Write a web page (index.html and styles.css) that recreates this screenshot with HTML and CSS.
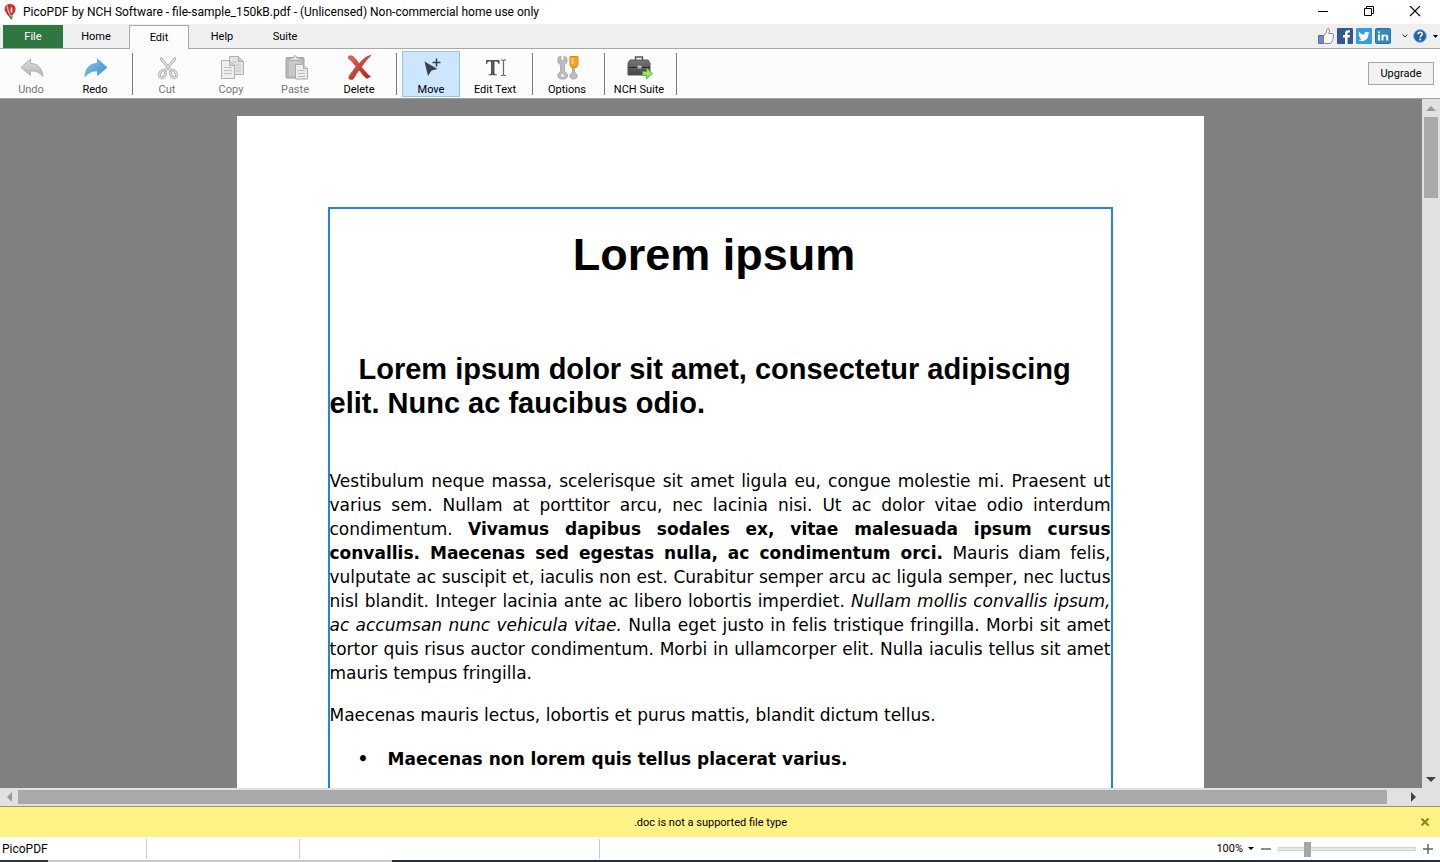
FILE: index.html
```
<!DOCTYPE html>
<html lang="en">
<head>
<meta charset="utf-8">
<title>PicoPDF by NCH Software</title>
<link rel="stylesheet" href="styles.css">
</head>
<body>
<svg class="defs" aria-hidden="true">
  <defs>
    <linearGradient id="gray" x1="0" y1="0" x2="0" y2="1"><stop offset="0" stop-color="#dedede"/><stop offset="1" stop-color="#b4b4b4"/></linearGradient>
    <linearGradient id="blue" x1="0" y1="0" x2="1" y2="1"><stop offset="0" stop-color="#86c3ee"/><stop offset="1" stop-color="#3b8fd0"/></linearGradient>
    <linearGradient id="red" x1="0" y1="0" x2="1" y2="1"><stop offset="0" stop-color="#ee6a55"/><stop offset="1" stop-color="#a91c14"/></linearGradient>
    <linearGradient id="dark" x1="0" y1="0" x2="0" y2="1"><stop offset="0" stop-color="#777"/><stop offset="1" stop-color="#444"/></linearGradient>
  </defs>
</svg>
<div class="app">
  <header class="titlebar">
    <svg class="logo" width="12" height="18" viewBox="0 0 12 18" aria-hidden="true"><path d="M6 1C2 1 .3 3.500.6 6.500.9 9 3 11 5 12.500h3c2-2 4-4 3.500-7.500C11 2.500 9 1 6 1z" fill="#c9352b"/><path d="M3 2.500c0 3 1.500 6 3 9" stroke="#ee9a8c" stroke-width="1.500" fill="none"/><path d="M7.500 4.500v5" stroke="#fff" stroke-width="1.500"/><path d="M5.500 12.500h3.500l-.5 4H6.500z" fill="#8c9a7a"/><path d="M3 10.500l4 5" stroke="#5a3a2a"/></svg>
    <h1 class="window-title">PicoPDF by NCH Software - file-sample_150kB.pdf - (Unlicensed) Non-commercial home use only</h1>
    <div class="window-controls">
      <button class="window-button" aria-label="Minimize"><svg width="12" height="12" viewBox="0 0 12 12"><path d="M1 5.500h10" stroke="#000" fill="none"/></svg></button>
      <button class="window-button" aria-label="Restore"><svg width="12" height="12" viewBox="0 0 12 12"><path d="M1.500 2.500h7v7h-7zM3.500 2.500v-2h7v7h-2" stroke="#000" fill="none"/></svg></button>
      <button class="window-button" aria-label="Close"><svg width="12" height="12" viewBox="0 0 12 12"><path d="M1 0l10 10M11 0L1 10" stroke="#000" stroke-width="1.100" fill="none"/></svg></button>
    </div>
  </header>

  <nav class="tabs" aria-label="Ribbon">
    <button class="tab tab-file">File</button>
    <button class="tab">Home</button>
    <button class="tab tab-active">Edit</button>
    <button class="tab">Help</button>
    <button class="tab">Suite</button>
    <div class="social">
      <button class="social-button" aria-label="Like"><svg width="16" height="16" viewBox="0 0 16 16"><path d="M.5 7.500h5v8h-5z" fill="#6e8cbc" stroke="#4d6ea8"/><path d="M5.500 8L8 5c1-1.500.5-4 1.800-4.500 1.800 0 2 2.500 1 5h4c1 .5 1 1.500.4 2.200.6.800.5 1.600-.2 2.200.4.900.1 1.600-.6 2 .3 1-.2 1.800-1 2.100.1.900-.5 1.500-1.400 1.500H7l-1.500-1z" fill="#fafafa" stroke="#777" stroke-width=".9"/></svg></button>
      <button class="social-button" aria-label="Facebook"><svg width="16" height="16" viewBox="0 0 16 16"><rect width="16" height="16" rx="1" fill="#37558f"/><path d="M8 16V9.500H6V7h2V5.500C8 3.300 9.200 2.200 11 2.200h2v2.400h-1.300c-.8 0-1.100.4-1.100 1.100V7H13l-.3 2.500h-2.100V16z" fill="#fff"/></svg></button>
      <button class="social-button" aria-label="Twitter"><svg width="16" height="16" viewBox="0 0 16 16"><rect width="16" height="16" rx="1" fill="#349ce0"/><path d="M13.800 4.300l-1.300.4a2.400 2.400 0 0 0-4.200 2.100C6.300 6.700 4.500 5.800 3 3.800c-.7 1.500-.2 2.700.8 3.400L2.600 7c.1 1.200.8 2 2 2.400l-1 .1c.3.800 1 1.400 2.100 1.500-.9.800-2.100 1.100-3.500 1 4.800 2.700 10.200.2 10.200-5.400z" fill="#fff"/></svg></button>
      <button class="social-button" aria-label="LinkedIn"><svg width="16" height="16" viewBox="0 0 16 16"><rect x=".5" y=".5" width="15" height="15" rx="1" fill="#3489bd" stroke="#25719f"/><path d="M3 6.500h2v6H3zM3 3.500h2v1.800H3zM6.500 6.500h2v1c1.300-1.800 4.700-1.300 4.700 1.500v3.500h-2V9.600c0-2-2.700-1.800-2.700 0v2.900h-2z" fill="#fff"/></svg></button>
      <button class="social-button" aria-label="More"><svg width="6" height="4" viewBox="0 0 6 4"><path d="M.5.5L3 3 5.500.5" stroke="#222" fill="none"/></svg></button>
      <button class="social-button" aria-label="Help"><svg width="14" height="14" viewBox="0 0 14 14"><circle cx="7" cy="7" r="6.400" fill="#1d5fb0" stroke="#8fb4dc"/><path d="M4.900 5.200c.2-2.700 4.500-2.500 4.300 0-.1 1.400-2 1.500-2 3.200" stroke="#fff" stroke-width="1.600" fill="none"/><circle cx="7.200" cy="10.500" r="1" fill="#fff"/></svg></button>
      <button class="social-button" aria-label="Help menu"><svg width="5" height="3" viewBox="0 0 5 3"><path d="M0 0h5L2.500 3z"/></svg></button>
    </div>
  </nav>

  <div class="toolbar" role="toolbar" aria-label="Edit">
    <div class="group group-first">
      <button class="tool" disabled><svg width="28" height="28" viewBox="0 0 28 28"><path d="M4 14.500L13.500 6V10.500C21 10.500 25 15 26 23.500 22 19 18.500 17.500 13.500 18V22.500z" fill="url(#gray)" stroke="#b0b0b0"/></svg>Undo</button>
      <button class="tool"><svg width="28" height="28" viewBox="0 0 28 28"><path d="M26 14.500L16.500 6V10.500C9 10.500 4.500 15 4 23.500 8 19 12 17.500 16.500 18V22.500z" fill="url(#blue)" stroke="#69aede"/></svg>Redo</button>
    </div>
    <div class="group">
      <button class="tool" disabled><svg width="28" height="28" viewBox="0 0 28 28"><g fill="none" stroke="#b9b9b9" stroke-width="3"><ellipse cx="9.500" cy="21" rx="2.800" ry="4" transform="rotate(28 9.500 21)"/><ellipse cx="20.500" cy="21" rx="2.800" ry="4" transform="rotate(-28 20.500 21)"/></g><g fill="none" stroke="#e2e2e2"><ellipse cx="9.500" cy="21" rx="2.800" ry="4" transform="rotate(28 9.500 21)"/><ellipse cx="20.500" cy="21" rx="2.800" ry="4" transform="rotate(-28 20.500 21)"/></g><path d="M8 4L7.500 7l10 11.500 1.500-1.500zM22 4l.5 3-10 11.500L11 17z" fill="#dedede" stroke="#b5b5b5"/></svg>Cut</button>
      <button class="tool" disabled><svg width="28" height="28" viewBox="0 0 28 28"><path d="M12.500 3.500h9l5 5v13h-14z" fill="#e3e3e3" stroke="#b0b0b0"/><path d="M21.500 3.500v5h5" fill="#ccc" stroke="#b0b0b0"/><path d="M15 9h5M15 12h9M19 15h5M19 18h5" stroke="#c3c3c3"/><path d="M4.500 7.500h8l5 5v13h-13z" fill="#eee" stroke="#b0b0b0"/><path d="M12.500 7.500v5h5" fill="#d0d0d0" stroke="#b0b0b0"/><path d="M7 14.500h8M7 17.500h8M7 20.500h8" stroke="#c0c0c0"/></svg>Copy</button>
      <button class="tool" disabled><svg width="28" height="28" viewBox="0 0 28 28"><rect x="5" y="4.500" width="18" height="20.500" rx="1" fill="#b8b8b8" stroke="#a2a2a2"/><path d="M8 7h12v16H8z" fill="#c9c9c9"/><path d="M9 7.500V5h3c0-3 4-3 4 0h3v2.500z" fill="#e0e0e0" stroke="#aaa"/><path d="M14.500 11.500h8l4 4v10.500h-12z" fill="#eee" stroke="#aaa"/><path d="M22.500 11.500v4h4" fill="#d5d5d5" stroke="#aaa"/><path d="M17 17.500h7M17 20.500h7M17 23.500h7" stroke="#bbb"/></svg>Paste</button>
      <button class="tool"><svg width="28" height="28" viewBox="0 0 28 28"><path d="M4 3c4-1 6 2 10 8 3-4 7-8 12-8.500C22 6 19 10 16.500 14c4 5 6.500 8 9 9.500l-3.500 2c-3-2-5.500-5.500-8-8.500-3 4-4.500 8-6.500 9.500C4 27 3 25 4.500 22.500c2-3 4.500-6 6.500-9C8.500 10 6 7 3 5z" fill="url(#red)" stroke="#b43228" stroke-width=".6"/></svg>Delete</button>
    </div>
    <div class="group">
      <button class="tool tool-selected" aria-pressed="true"><svg width="28" height="28" viewBox="0 0 28 28"><path d="M7.500 8.500l13 7.500-6 1.500-3.500 5.500z" fill="#3c4146"/><path d="M19.500 5.500v8M15.500 9.500h8" stroke="#3c4146" stroke-width="1.600"/></svg>Move</button>
      <button class="tool"><svg width="28" height="28" viewBox="0 0 28 28"><path d="M5 7h13.500v4h-1c-.5-2-1-2.500-4-2.500V20c0 1 .5 1.300 2.500 1.500v.8H7.500v-.8C9.500 21.300 10 21 10 20V8.500c-3 0-3.500.5-4 2.500H5z" fill="#555"/><path d="M20 7h1.500l1 .8 1-.8H25M20 22.500h1.500l1-.8 1 .8H25M22.500 7.800v14" stroke="#666" stroke-width="1.200" fill="none"/></svg>Edit Text</button>
    </div>
    <div class="group">
      <button class="tool"><svg width="28" height="28" viewBox="0 0 28 28"><path d="M5 4.500L8 3v4.500h3V3l3 2v4.500l-2.500 2.500v6.500L14.500 21v3l-2.500 2H7.500L5 24v-3l2.500-2.500V12L5 9.500z" fill="#bcbcbc" stroke="#9c9c9c" stroke-width=".7"/><circle cx="9.700" cy="22.500" r="1.500" fill="#eee"/><path d="M19.500 14h2v5l2.500 2.500v3L21.500 26h-2L17 24.500v-3l2.500-2.500z" fill="#bcbcbc" stroke="#999" stroke-width=".7"/><path d="M17 3.500h8v8l-1.500 3h-5l-1.500-3z" fill="#f5a21c" stroke="#de8b13"/><path d="M19.500 5v6" stroke="#ffd174" stroke-width="2"/></svg>Options</button>
    </div>
    <div class="group">
      <button class="tool"><svg width="28" height="28" viewBox="0 0 28 28"><path d="M10.500 7V4h7v3" stroke="#555" stroke-width="1.500" fill="none"/><path d="M5 7h18l2 3v12H3V10z" fill="url(#dark)" stroke="#555"/><path d="M3 14.500h22" stroke="#2c2c2c"/><rect x="12.500" y="12.500" width="4" height="3" fill="#bbb"/><path d="M17.500 18.500h4V15l6 5.500-6 5.500v-3.500h-4z" fill="#9be36a" stroke="#50a52c" stroke-width=".8"/></svg>NCH Suite</button>
    </div>
    <button class="upgrade">Upgrade</button>
  </div>

  <main class="viewer">
    <div class="canvas">
      <article class="page">
        <div class="selection">
          <h2 class="doc-title">Lorem ipsum</h2>
          <h3 class="doc-heading">Lorem ipsum dolor sit amet, consectetur adipiscing elit. Nunc ac faucibus odio.</h3>
          <p class="doc-text">Vestibulum neque massa, scelerisque sit amet ligula eu, congue molestie mi. Praesent ut varius sem. Nullam at porttitor arcu, nec lacinia nisi. Ut ac dolor vitae odio interdum condimentum. <b>Vivamus dapibus sodales ex, vitae malesuada ipsum cursus convallis. Maecenas sed egestas nulla, ac condimentum orci.</b> Mauris diam felis, vulputate ac suscipit et, iaculis non est. Curabitur semper arcu ac ligula semper, nec luctus nisl blandit. Integer lacinia ante ac libero lobortis imperdiet. <i>Nullam mollis convallis ipsum, ac accumsan nunc vehicula vitae.</i> Nulla eget justo in felis tristique fringilla. Morbi sit amet tortor quis risus auctor condimentum. Morbi in ullamcorper elit. Nulla iaculis tellus sit amet mauris tempus fringilla.</p>
          <p class="doc-text">Maecenas mauris lectus, lobortis et purus mattis, blandit dictum tellus.</p>
          <ul class="doc-list"><li>Maecenas non lorem quis tellus placerat varius.</li></ul>
        </div>
      </article>
    </div>
    <div class="scroll-y">
      <button class="scroll-arrow arrow-dim" aria-label="Scroll up"><svg width="10" height="5" viewBox="0 0 10 5"><path d="M0 5l5-5 5 5z"/></svg></button>
      <div class="track-y"><div class="thumb-y"></div></div>
      <button class="scroll-arrow" aria-label="Scroll down"><svg width="10" height="5" viewBox="0 0 10 5"><path d="M0 0l5 5 5-5z"/></svg></button>
    </div>
  </main>
  <div class="scroll-x">
    <button class="scroll-arrow arrow-dim" aria-label="Scroll left"><svg width="5" height="10" viewBox="0 0 5 10"><path d="M5 0L0 5l5 5z"/></svg></button>
    <div class="track-x"><div class="thumb-x"></div></div>
    <button class="scroll-arrow" aria-label="Scroll right"><svg width="5" height="10" viewBox="0 0 5 10"><path d="M0 0l5 5-5 5z"/></svg></button>
  </div>

  <div class="notice" role="alert">
    <span class="notice-text">.doc is not a supported file type</span>
    <button class="notice-close" aria-label="Dismiss"><svg width="8" height="8" viewBox="0 0 8 8"><path d="M.5.5l7 7M7.500.5l-7 7" stroke="#8d8420" stroke-width="2"/></svg></button>
  </div>

  <footer class="status">
    <span class="status-cell cell-name">PicoPDF</span>
    <span class="status-cell cell-info"></span>
    <span class="status-cell cell-wide"></span>
    <div class="zoom">
      <button class="zoom-menu">100%<svg width="6" height="3" viewBox="0 0 6 3"><path d="M0 0h6L3 3z"/></svg></button>
      <button class="zoom-step" aria-label="Zoom out"><svg width="10" height="10" viewBox="0 0 10 10"><path d="M0 5h10" stroke="#666" stroke-width="1.500"/></svg></button>
      <input class="zoom-slider" type="range" min="0" max="100" value="19" aria-label="Zoom level">
      <button class="zoom-step" aria-label="Zoom in"><svg width="10" height="10" viewBox="0 0 10 10"><path d="M0 5h10M5 0v10" stroke="#666" stroke-width="1.500"/></svg></button>
    </div>
  </footer>
  <div class="desktop-edge"></div>
</div>
</body>
</html>
```
FILE: styles.css
```
* { box-sizing: border-box; }
body { margin: 0; font-family: Roboto, "Noto Sans", sans-serif; font-size: 11px; color: #000; }
button { margin: 0; padding: 0; border: 0; background: none; font: inherit; color: inherit; }
svg { display: block; flex: none; }
.defs { position: absolute; width: 0; height: 0; }
.app { display: flex; flex-direction: column; height: 100vh; overflow: hidden; background: #fff; }

.titlebar { display: flex; align-items: center; height: 24px; padding-left: 4px; }
.logo { margin-right: 7px; }
.window-title { margin: 0; font-size: 12px; font-weight: 400; line-height: 24px; white-space: nowrap; }
.window-controls { display: flex; margin-left: auto; padding-right: 2px; }
.window-button { display: flex; align-items: center; justify-content: center; width: 46px; height: 20px; }

.tabs { display: flex; align-items: flex-end; gap: 3px; height: 25px; padding: 0 2px 0 3px; background: #efefef; border-bottom: 1px solid #a9a9a9; }
.tab { width: 60px; height: 23px; line-height: 22px; }
.tab-file { background: #2f7640; color: #fff; }
.tab-active { height: 24px; margin-bottom: -1px; background: #fcfcfc; border: 1px solid #a9a9a9; border-bottom: 0; }
.social { display: flex; align-items: center; gap: 3px; height: 100%; margin-left: auto; }
.social-button:nth-child(5) { margin: 0 2px 0 8px; }
.social-button:nth-child(7) { margin-left: 3px; }

.toolbar { display: flex; align-items: center; height: 50px; padding-right: 6px; background: #fcfcfc; border-bottom: 1px solid #a0a0a0; }
.group { display: flex; align-items: center; gap: 6px; height: 42px; padding: 0 8px 0 5px; border-right: 1px solid #777; }
.group-first { padding-left: 2px; }
.tool { display: flex; flex-direction: column; align-items: center; width: 58px; height: 46px; padding-top: 1px; border: 1px solid transparent; line-height: 18px; white-space: nowrap; }
.tool:disabled { color: #777; }
.tool-selected { background: #cce6fd; border-color: #91c6ef; }
.upgrade { width: 66px; height: 23px; margin-left: auto; background: #f2f2f2; border: 1px solid #a5a5a5; }

.viewer { display: flex; flex: 1; min-height: 0; background: #808080; }
.canvas { flex: 1; min-width: 0; padding: 17px 0 0 18px; overflow: hidden; }
.page { width: 967px; margin: 0 auto; padding: 91px 91px 0; background: #fff; }
.selection { min-height: 1100px; padding-top: 20px; border: 2px solid #2384dc; }
.doc-title { margin: 0 0 71px; padding-right: 12px; font: bold 45px/52px "Liberation Sans", sans-serif; text-align: center; }
.doc-heading { margin: 0 0 49px; font: bold 29px/34px "Liberation Sans", sans-serif; text-indent: 29px; }
.doc-text { margin: 0 0 18px; font: 17px/24px "DejaVu Sans", sans-serif; text-align: justify; }
.doc-list { margin: 20px 0 0; padding: 0 0 0 28px; list-style: none; font: bold 17px/24px "DejaVu Sans", sans-serif; }
.doc-list li { display: flex; }
.doc-list li::before { content: "•"; width: 30px; }

.scroll-y { display: flex; flex-direction: column; width: 18px; background: #e1e1e1; }
.scroll-x { display: flex; height: 18px; background: #e1e1e1; }
.scroll-arrow { display: flex; align-items: center; justify-content: center; width: 18px; height: 18px; fill: #444; }
.arrow-dim { fill: #999; }
.track-y { flex: 1; padding: 0 2px; }
.thumb-y { height: 81px; background: #a9a9a9; }
.track-x { flex: 1; padding: 2px 17px 2px 0; }
.thumb-x { height: 14px; background: #a9a9a9; }
.scroll-x { padding-right: 18px; }

.notice { display: flex; align-items: center; height: 31px; padding-right: 11px; background: #fff386; border-top: 1px solid #97926a; }
.notice-text { flex: 1; text-align: center; }

.status { display: flex; align-items: center; height: 23px; padding-right: 7px; }
.status-cell { height: 20px; line-height: 20px; padding-left: 2px; border-right: 1px solid #ccc; }
.cell-name { width: 147px; font-size: 12px; }
.cell-info { width: 153px; }
.cell-wide { width: 300px; }
.zoom { display: flex; align-items: center; gap: 7px; margin-left: auto; }
.zoom-menu { display: flex; align-items: center; gap: 5px; }
.zoom-slider { appearance: none; width: 138px; height: 15px; margin: 0; background: none; }
.zoom-slider::-webkit-slider-runnable-track { height: 4px; background: #e5e8e5; border: 1px solid #d4d4d4; }
.zoom-slider::-webkit-slider-thumb { appearance: none; width: 7px; height: 15px; margin-top: -6px; background: #a6a6a6; }
.desktop-edge { height: 2px; background: linear-gradient(to right, #2a363c 48px, #c8c8c8 48px 392px, #22303a 392px); }
```
